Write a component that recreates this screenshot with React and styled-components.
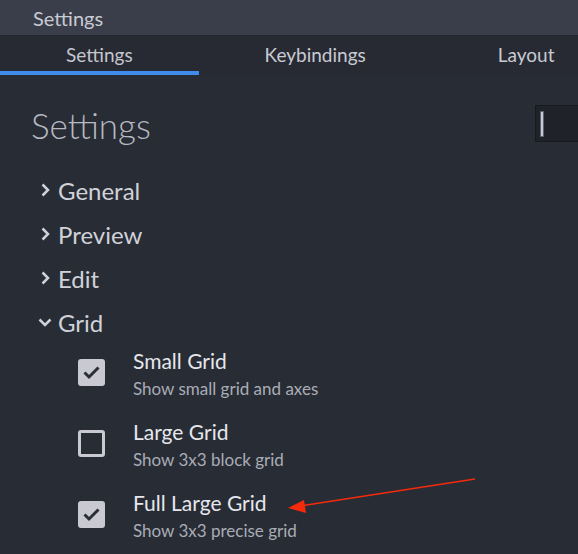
import React from "react";
import styled, { createGlobalStyle } from "styled-components";

const Global = createGlobalStyle`
  html, body {
    margin: 0;
    padding: 0;
    background: #282c35;
    overflow: hidden;
  }
  body {
    font-family: Lato, "Noto Sans", sans-serif;
  }
`;

const Window = styled.div`
  width: 100vw;
  height: 100vh;
  overflow: hidden;
  background: #282c35;
  position: relative;
`;

const TitleBar = styled.div`
  height: 35px;
  background: #3a3e4a;
  border-bottom: 1px solid #23262d;
  display: flex;
  align-items: center;
  padding-left: 33px;
  color: #c9cbd2;
  font-size: 20px;
`;

const TabBar = styled.div`
  display: flex;
  height: 39px;
  background: #272a33;
  width: 760px;
`;

const Tab = styled.div`
  padding: 7px 66px 0;
  font-size: 19px;
  color: ${p => (p.active ? "#c4c6ce" : "#c9cbd2")};
  border-bottom: 4px solid ${p => (p.active ? "#3f8cec" : "transparent")};
  height: 28px;
  white-space: nowrap;
`;

const Content = styled.div`
  width: 760px;
  padding: 29px 0 0 31px;
  box-sizing: border-box;
`;

const HeaderRow = styled.div`
  display: grid;
  grid-template-columns: 1fr 225px;
  align-items: start;
`;

const Heading = styled.h1`
  margin: 0;
  font-size: 35px;
  font-weight: 300;
  line-height: 43px;
  color: #b6b9c2;
`;

const SearchBox = styled.div`
  height: 35px;
  margin-top: 1px;
  background: #1f2228;
  border: 1px solid #17191e;
  display: flex;
  align-items: center;
  padding-left: 4px;
`;

const Caret = styled.span`
  width: 2px;
  height: 24px;
  background: #c6c9d1;
  border: 1px solid #5d6170;
`;

const Tree = styled.ul`
  list-style: none;
  margin: 21px 0 0;
  padding: 0 0 0 7px;
`;

const Node = styled.li`
  display: flex;
  align-items: center;
  height: 44px;
  font-size: 24px;
  color: #d0d2d9;
`;

const Chevron = styled.svg`
  width: 14px;
  height: 14px;
  margin-right: 6px;
  flex-shrink: 0;
`;

const Options = styled.div`
  margin-top: -7px;
  padding-left: 47px;
  display: flex;
  flex-direction: column;
`;

const Option = styled.label`
  display: flex;
  align-items: center;
  height: 71px;
`;

const Box = styled.span`
  width: 27px;
  height: 27px;
  box-sizing: border-box;
  border-radius: 3px;
  border: 3px solid #c8c9d1;
  background: ${p => (p.checked ? "#c8c9d1" : "transparent")};
  display: flex;
  align-items: center;
  justify-content: center;
  margin-right: 28px;
  flex-shrink: 0;
`;

const OptionText = styled.div`
  display: flex;
  flex-direction: column;
`;

const OptionTitle = styled.span`
  font-size: 21px;
  line-height: 30px;
  color: #e6e7ec;
`;

const OptionDesc = styled.span`
  margin-top: 2px;
  font-size: 17px;
  line-height: 22px;
  color: #a9acb5;
`;

const Annotation = styled.svg`
  position: absolute;
  left: 0;
  top: 0;
  width: 578px;
  height: 554px;
  pointer-events: none;
`;

const Right = () => (
  <Chevron viewBox="0 0 14 14">
    <path d="M4.5 1.5 L10 7 L4.5 12.5" fill="none" stroke="#d0d2d9" strokeWidth="2.5" />
  </Chevron>
);

const Down = () => (
  <Chevron viewBox="0 0 14 14">
    <path d="M1.5 4.5 L7 10 L12.5 4.5" fill="none" stroke="#d0d2d9" strokeWidth="2.5" />
  </Chevron>
);

const Check = () => (
  <svg width="21" height="21" viewBox="0 0 21 21">
    <path d="M3.5 10.5 L8 15 L17.5 5.5" fill="none" stroke="#2b2e36" strokeWidth="3" />
  </svg>
);

const options = [
  { title: "Small Grid", desc: "Show small grid and axes", checked: true },
  { title: "Large Grid", desc: "Show 3x3 block grid", checked: false },
  { title: "Full Large Grid", desc: "Show 3x3 precise grid", checked: true },
];

export default function App() {
  return (
    <Window>
      <Global />
      <TitleBar>Settings</TitleBar>
      <TabBar>
        <Tab active>Settings</Tab>
        <Tab>Keybindings</Tab>
        <Tab>Layout</Tab>
      </TabBar>
      <Content>
        <HeaderRow>
          <Heading>Settings</Heading>
          <SearchBox>
            <Caret />
          </SearchBox>
        </HeaderRow>
        <Tree>
          <Node><Right />General</Node>
          <Node><Right />Preview</Node>
          <Node><Right />Edit</Node>
          <Node><Down />Grid</Node>
        </Tree>
        <Options>
          {options.map(o => (
            <Option key={o.title}>
              <Box checked={o.checked}>{o.checked && <Check />}</Box>
              <OptionText>
                <OptionTitle>{o.title}</OptionTitle>
                <OptionDesc>{o.desc}</OptionDesc>
              </OptionText>
            </Option>
          ))}
        </Options>
      </Content>
      <Annotation viewBox="0 0 578 554">
        <line x1="475" y1="479" x2="300" y2="506" stroke="#f52a0a" strokeWidth="1.5" />
        <polygon points="288,508 304,500 306,513" fill="#f52a0a" />
      </Annotation>
    </Window>
  );
}
